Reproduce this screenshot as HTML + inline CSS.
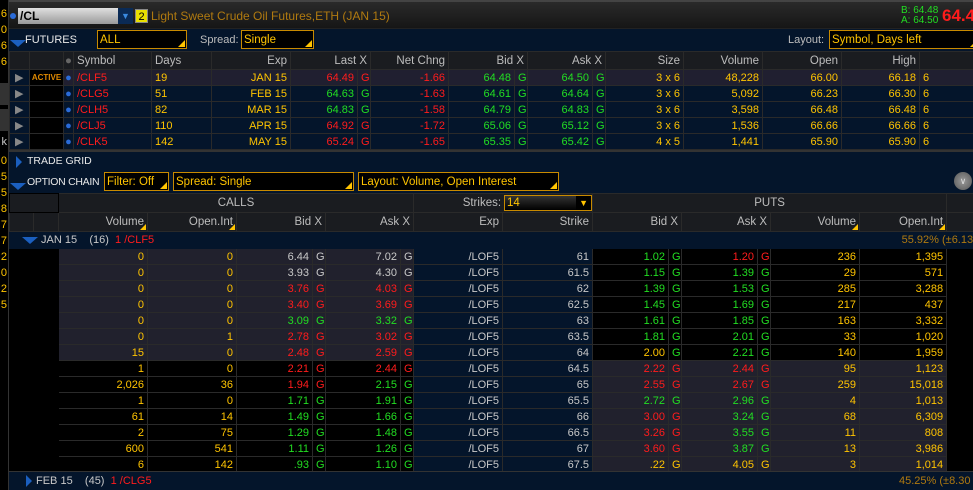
<!DOCTYPE html>
<html><head><meta charset="utf-8">
<style>
*{margin:0;padding:0;box-sizing:border-box}
body{width:973px;height:490px;background:#000;overflow:hidden;position:relative;font-family:"Liberation Sans",sans-serif;font-size:11px;color:#c8c8c8}
.abs{position:absolute}
.y{color:#ffc400}.r{color:#ff1c1c}.g{color:#22dd22}.w{color:#c8c8c8}.o{color:#e08a00}
table{border-collapse:collapse;table-layout:fixed;position:absolute}
td{border:1px solid #2a2a2a;white-space:nowrap;overflow:hidden;text-align:right;padding:0 3px;height:16px;line-height:14px}
td.gl{text-align:left;padding-left:3px}
td.l{text-align:left}
.sel{position:absolute;border:1px solid #c88a00;background:#000;color:#ffc400;font-size:11.5px;padding-left:2px;line-height:15px}
.sel:after{content:"";position:absolute;right:1px;bottom:1px;border-left:7px solid transparent;border-bottom:7px solid #ffc400}
.tri-d{display:inline-block;width:0;height:0;border-left:8px solid transparent;border-right:8px solid transparent;border-top:7px solid #1b5fbf}
.tri-r{display:inline-block;width:0;height:0;border-top:6px solid transparent;border-bottom:6px solid transparent;border-left:6px solid #1b5fbf}
.hd td{background:#1a1c20;color:#bdbdbd;font-size:11.5px}
.srt{position:relative}
.srt:after{content:"";position:absolute;right:1px;bottom:1px;border-left:6px solid transparent;border-bottom:6px solid #ffc400}
.nv{background:#04152b}
.sh{background:#21212d}
.bk{background:#000}
</style></head><body>
<!-- left strip -->
<div class="abs" style="left:0;top:0;width:9px;height:490px;background:#000;border-right:1px solid #333"></div>
<div class="abs y" style="left:-3px;top:6px;font-size:11px;line-height:16px;width:10px;text-align:right">
6<br>0<br>6<br>6</div>
<div class="abs" style="left:0;top:83px;width:8px;height:22px;background:#333"></div>
<div class="abs" style="left:0;top:109px;width:8px;height:22px;background:#333"></div>
<div class="abs w" style="left:-3px;top:136px;width:10px;text-align:right">k</div>
<div class="abs y" style="left:-3px;top:153px;line-height:16px;width:10px;text-align:right">0<br>5<br>5<br>8<br>7<br>7<br>2<br>0<br>2<br>5</div>

<!-- top bar -->
<div class="abs" style="left:9px;top:0;width:964px;height:28px;background:linear-gradient(#2a2a2a,#161616);border-top:2px solid #444"></div>
<div class="abs" style="left:10px;top:13px;width:6px;height:6px;border-radius:3px;background:#2a6bd8"></div>
<div class="abs" style="left:18px;top:8px;width:100px;height:16px;background:linear-gradient(#e0e0e0,#9a9a9a);color:#000;font-size:12px;font-weight:bold;padding-left:2px;line-height:16px">/CL</div>
<div class="abs" style="left:118px;top:8px;width:15px;height:16px;background:#0a2a55;color:#3a8ae0;text-align:center;font-size:9px;line-height:16px">&#9660;</div>
<div class="abs" style="left:135px;top:9px;width:13px;height:14px;background:#e8e000;color:#000;text-align:center;line-height:14px;font-size:11px;border:1px solid #888">2</div>
<div class="abs" style="left:151px;top:9px;color:#b07a10;font-size:12px">Light Sweet Crude Oil Futures,ETH (JAN 15)</div>
<div class="abs g" style="left:901px;top:6px;font-size:10px;line-height:10px">B: 64.48<br>A: 64.50</div>
<div class="abs r" style="left:942px;top:6px;font-size:17px;font-weight:bold">64.49</div>

<!-- futures header -->
<div class="abs nv" style="left:9px;top:28px;width:964px;height:23px;border-top:1px solid #222"></div>
<div class="abs" style="left:10px;top:38px"><span class="tri-d"></span></div>
<div class="abs" style="left:25px;top:34px;color:#e8e8e8;font-size:11px">FUTURES</div>
<div class="sel" style="left:97px;top:30px;width:90px;height:19px;line-height:18px">ALL</div>
<div class="abs" style="left:200px;top:34px;color:#bdbdbd;font-size:11px">Spread:</div>
<div class="sel" style="left:241px;top:30px;width:73px;height:19px;line-height:18px">Single</div>
<div class="abs" style="left:788px;top:34px;color:#bdbdbd;font-size:11px">Layout:</div>
<div class="sel" style="left:829px;top:30px;width:150px;height:19px;line-height:18px">Symbol, Days left</div>

<table style="left:9px;top:51px;width:1000px">
<colgroup><col style="width:20px"><col style="width:34px"><col style="width:10px"><col style="width:78px"><col style="width:60px"><col style="width:79px"><col style="width:67px"><col style="width:13px"><col style="width:78px"><col style="width:66px"><col style="width:13px"><col style="width:65px"><col style="width:13px"><col style="width:78px"><col style="width:79px"><col style="width:79px"><col style="width:78px"><col style="width:90px"></colgroup>
<tr class="hd" style="height:18px"><td class="nv"></td><td></td><td style="color:#666;text-align:center;padding:0">●</td><td class="l">Symbol</td><td class="l">Days</td><td>Exp</td><td colspan="2">Last X</td><td>Net Chng</td><td colspan="2">Bid X</td><td colspan="2">Ask X</td><td>Size</td><td>Volume</td><td>Open</td><td>High</td><td></td></tr>
<tr style="background:#201f30"><td class="nv" style="color:#888;padding:0 0 0 5px;text-align:left">▶</td><td class="bk o" style="font-size:8px;padding:0;text-align:center;font-weight:bold">ACTIVE</td><td style="color:#2a6bd8;padding:0;text-align:center">●</td><td class="l r">/CLF5</td><td class="l y">19</td><td class="y">JAN 15</td><td class="r">64.49</td><td class="gl r">G</td><td class="r">-1.66</td><td class="g">64.48</td><td class="gl g">G</td><td class="g">64.50</td><td class="gl g">G</td><td class="y">3 x 6</td><td class="y">48,228</td><td class="y">66.00</td><td class="y">66.18</td><td class="y l">6</td></tr>
<tr class="nv"><td style="color:#888;padding:0 0 0 5px;text-align:left">▶</td><td class="bk"></td><td style="color:#2a6bd8;padding:0;text-align:center">●</td><td class="l r">/CLG5</td><td class="l y">51</td><td class="y">FEB 15</td><td class="g">64.63</td><td class="gl g">G</td><td class="r">-1.63</td><td class="g">64.61</td><td class="gl g">G</td><td class="g">64.64</td><td class="gl g">G</td><td class="y">3 x 6</td><td class="y">5,092</td><td class="y">66.23</td><td class="y">66.30</td><td class="y l">6</td></tr>
<tr class="nv"><td style="color:#888;padding:0 0 0 5px;text-align:left">▶</td><td class="bk"></td><td style="color:#2a6bd8;padding:0;text-align:center">●</td><td class="l r">/CLH5</td><td class="l y">82</td><td class="y">MAR 15</td><td class="g">64.83</td><td class="gl g">G</td><td class="r">-1.58</td><td class="g">64.79</td><td class="gl g">G</td><td class="g">64.83</td><td class="gl g">G</td><td class="y">3 x 6</td><td class="y">3,598</td><td class="y">66.48</td><td class="y">66.48</td><td class="y l">6</td></tr>
<tr class="nv"><td style="color:#888;padding:0 0 0 5px;text-align:left">▶</td><td class="bk"></td><td style="color:#2a6bd8;padding:0;text-align:center">●</td><td class="l r">/CLJ5</td><td class="l y">110</td><td class="y">APR 15</td><td class="r">64.92</td><td class="gl r">G</td><td class="r">-1.72</td><td class="g">65.06</td><td class="gl g">G</td><td class="g">65.12</td><td class="gl g">G</td><td class="y">3 x 6</td><td class="y">1,536</td><td class="y">66.66</td><td class="y">66.66</td><td class="y l">6</td></tr>
<tr class="nv"><td style="color:#888;padding:0 0 0 5px;text-align:left">▶</td><td class="bk"></td><td style="color:#2a6bd8;padding:0;text-align:center">●</td><td class="l r">/CLK5</td><td class="l y">142</td><td class="y">MAY 15</td><td class="r">65.24</td><td class="gl r">G</td><td class="r">-1.65</td><td class="g">65.35</td><td class="gl g">G</td><td class="g">65.42</td><td class="gl g">G</td><td class="y">4 x 5</td><td class="y">1,441</td><td class="y">65.90</td><td class="y">65.90</td><td class="y l">6</td></tr>
</table>

<!-- trade grid / option chain -->
<div class="abs nv" style="left:9px;top:150px;width:964px;height:43px;border-top:2px solid #333"></div>
<div class="abs" style="left:16px;top:156px"><span class="tri-r"></span></div>
<div class="abs" style="left:27px;top:155px;color:#e8e8e8;font-size:10.5px">TRADE GRID</div>
<div class="abs" style="left:10px;top:181px"><span class="tri-d"></span></div>
<div class="abs" style="left:27px;top:176px;color:#e8e8e8;font-size:10.5px;letter-spacing:-0.3px">OPTION CHAIN</div>
<div class="sel" style="left:104px;top:172px;width:65px;height:19px;line-height:19px">Filter: Off</div>
<div class="sel" style="left:173px;top:172px;width:181px;height:19px;line-height:19px">Spread: Single</div>
<div class="sel" style="left:358px;top:172px;width:201px;height:19px;line-height:19px">Layout: Volume, Open Interest</div>
<div class="abs" style="left:954px;top:172px;width:18px;height:18px;border-radius:9px;background:radial-gradient(#9a9a9a,#555);color:#ddd;font-size:9px;text-align:center;line-height:18px">&#8744;</div>

<table style="left:9px;top:193px;width:964px">
<colgroup><col style="width:24px"><col style="width:25px"><col style="width:89px"><col style="width:89px"><col style="width:76px"><col style="width:13px"><col style="width:75px"><col style="width:13px"><col style="width:89px"><col style="width:90px"><col style="width:76px"><col style="width:13px"><col style="width:76px"><col style="width:13px"><col style="width:89px"><col style="width:87px"><col style="width:27px"></colgroup>
<tr class="hd" style="height:19px"><td class="bk" colspan="2" style="border-color:#000"></td><td colspan="6" style="text-align:center">CALLS</td><td class="nv" colspan="2" style="padding:0"><span style="display:inline-block;vertical-align:middle">Strikes:</span><span style="display:inline-block;vertical-align:middle;width:88px;height:16px;border:1px solid #c88a00;background:linear-gradient(#333,#000);color:#ffc400;text-align:left;padding-left:2px;margin-left:3px;position:relative;line-height:14px">14<span style="position:absolute;right:0;top:0;width:15px;height:14px;background:#000;color:#ffc400;text-align:center;font-size:9px">▼</span></span></td><td colspan="6" style="text-align:center">PUTS</td><td class="bk"></td></tr>
<tr class="hd" style="height:19px"><td></td><td></td><td class="srt">Volume</td><td class="srt">Open.Int</td><td colspan="2">Bid X</td><td colspan="2">Ask X</td><td class="nv">Exp</td><td class="nv">Strike</td><td colspan="2">Bid X</td><td colspan="2">Ask X</td><td class="srt">Volume</td><td class="srt">Open.Int</td><td class="bk"></td></tr>
<tr class="nv" style="height:17px"><td colspan="9" style="text-align:left;padding-left:12px;border-color:#04152b;color:#c8c8c8"><span class="tri-d" style="vertical-align:middle"></span> JAN 15 &nbsp;&nbsp; (16) &nbsp;<span class="r">1 /CLF5</span></td><td colspan="8" style="color:#b07a10;border-color:#04152b;text-align:right;padding-right:0">55.92% (±6.13</td></tr>

<tr><td class="bk" style="border-color:#000"></td><td class="bk" style="border-color:#000"></td><td class="sh y">0</td><td class="sh y">0</td><td class="sh w">6.44</td><td class="sh gl w">G</td><td class="sh w">7.02</td><td class="sh gl w">G</td><td class="nv w">/LOF5</td><td class="nv w">61</td><td class="bk g">1.02</td><td class="bk gl g">G</td><td class="bk r">1.20</td><td class="bk gl r">G</td><td class="bk y">236</td><td class="bk y">1,395</td><td class="bk" style="border-color:#000"></td></tr>
<tr><td class="bk" style="border-color:#000"></td><td class="bk" style="border-color:#000"></td><td class="sh y">0</td><td class="sh y">0</td><td class="sh w">3.93</td><td class="sh gl w">G</td><td class="sh w">4.30</td><td class="sh gl w">G</td><td class="nv w">/LOF5</td><td class="nv w">61.5</td><td class="bk g">1.15</td><td class="bk gl g">G</td><td class="bk g">1.39</td><td class="bk gl g">G</td><td class="bk y">29</td><td class="bk y">571</td><td class="bk" style="border-color:#000"></td></tr>
<tr><td class="bk" style="border-color:#000"></td><td class="bk" style="border-color:#000"></td><td class="sh y">0</td><td class="sh y">0</td><td class="sh r">3.76</td><td class="sh gl r">G</td><td class="sh r">4.03</td><td class="sh gl r">G</td><td class="nv w">/LOF5</td><td class="nv w">62</td><td class="bk g">1.39</td><td class="bk gl g">G</td><td class="bk g">1.53</td><td class="bk gl g">G</td><td class="bk y">285</td><td class="bk y">3,288</td><td class="bk" style="border-color:#000"></td></tr>
<tr><td class="bk" style="border-color:#000"></td><td class="bk" style="border-color:#000"></td><td class="sh y">0</td><td class="sh y">0</td><td class="sh r">3.40</td><td class="sh gl r">G</td><td class="sh r">3.69</td><td class="sh gl r">G</td><td class="nv w">/LOF5</td><td class="nv w">62.5</td><td class="bk g">1.45</td><td class="bk gl g">G</td><td class="bk g">1.69</td><td class="bk gl g">G</td><td class="bk y">217</td><td class="bk y">437</td><td class="bk" style="border-color:#000"></td></tr>
<tr><td class="bk" style="border-color:#000"></td><td class="bk" style="border-color:#000"></td><td class="sh y">0</td><td class="sh y">0</td><td class="sh g">3.09</td><td class="sh gl g">G</td><td class="sh g">3.32</td><td class="sh gl g">G</td><td class="nv w">/LOF5</td><td class="nv w">63</td><td class="bk g">1.61</td><td class="bk gl g">G</td><td class="bk g">1.85</td><td class="bk gl g">G</td><td class="bk y">163</td><td class="bk y">3,332</td><td class="bk" style="border-color:#000"></td></tr>
<tr><td class="bk" style="border-color:#000"></td><td class="bk" style="border-color:#000"></td><td class="sh y">0</td><td class="sh y">1</td><td class="sh r">2.78</td><td class="sh gl r">G</td><td class="sh r">3.02</td><td class="sh gl r">G</td><td class="nv w">/LOF5</td><td class="nv w">63.5</td><td class="bk g">1.81</td><td class="bk gl g">G</td><td class="bk g">2.01</td><td class="bk gl g">G</td><td class="bk y">33</td><td class="bk y">1,020</td><td class="bk" style="border-color:#000"></td></tr>
<tr><td class="bk" style="border-color:#000"></td><td class="bk" style="border-color:#000"></td><td class="sh y">15</td><td class="sh y">0</td><td class="sh r">2.48</td><td class="sh gl r">G</td><td class="sh r">2.59</td><td class="sh gl r">G</td><td class="nv w">/LOF5</td><td class="nv w">64</td><td class="bk y">2.00</td><td class="bk gl g">G</td><td class="bk g">2.21</td><td class="bk gl g">G</td><td class="bk y">140</td><td class="bk y">1,959</td><td class="bk" style="border-color:#000"></td></tr>
<tr><td class="bk" style="border-color:#000"></td><td class="bk" style="border-color:#000"></td><td class="bk y">1</td><td class="bk y">0</td><td class="bk r">2.21</td><td class="bk gl r">G</td><td class="bk r">2.44</td><td class="bk gl r">G</td><td class="nv w">/LOF5</td><td class="nv w">64.5</td><td class="sh r">2.22</td><td class="sh gl r">G</td><td class="sh r">2.44</td><td class="sh gl r">G</td><td class="sh y">95</td><td class="sh y">1,123</td><td class="bk" style="border-color:#000"></td></tr>
<tr><td class="bk" style="border-color:#000"></td><td class="bk" style="border-color:#000"></td><td class="bk y">2,026</td><td class="bk y">36</td><td class="bk r">1.94</td><td class="bk gl r">G</td><td class="bk g">2.15</td><td class="bk gl g">G</td><td class="nv w">/LOF5</td><td class="nv w">65</td><td class="sh r">2.55</td><td class="sh gl r">G</td><td class="sh r">2.67</td><td class="sh gl r">G</td><td class="sh y">259</td><td class="sh y">15,018</td><td class="bk" style="border-color:#000"></td></tr>
<tr><td class="bk" style="border-color:#000"></td><td class="bk" style="border-color:#000"></td><td class="bk y">1</td><td class="bk y">0</td><td class="bk g">1.71</td><td class="bk gl g">G</td><td class="bk g">1.91</td><td class="bk gl g">G</td><td class="nv w">/LOF5</td><td class="nv w">65.5</td><td class="sh g">2.72</td><td class="sh gl g">G</td><td class="sh g">2.96</td><td class="sh gl g">G</td><td class="sh y">4</td><td class="sh y">1,013</td><td class="bk" style="border-color:#000"></td></tr>
<tr><td class="bk" style="border-color:#000"></td><td class="bk" style="border-color:#000"></td><td class="bk y">61</td><td class="bk y">14</td><td class="bk g">1.49</td><td class="bk gl g">G</td><td class="bk g">1.66</td><td class="bk gl g">G</td><td class="nv w">/LOF5</td><td class="nv w">66</td><td class="sh r">3.00</td><td class="sh gl r">G</td><td class="sh g">3.24</td><td class="sh gl g">G</td><td class="sh y">68</td><td class="sh y">6,309</td><td class="bk" style="border-color:#000"></td></tr>
<tr><td class="bk" style="border-color:#000"></td><td class="bk" style="border-color:#000"></td><td class="bk y">2</td><td class="bk y">75</td><td class="bk g">1.29</td><td class="bk gl g">G</td><td class="bk g">1.48</td><td class="bk gl g">G</td><td class="nv w">/LOF5</td><td class="nv w">66.5</td><td class="sh r">3.26</td><td class="sh gl r">G</td><td class="sh g">3.55</td><td class="sh gl g">G</td><td class="sh y">11</td><td class="sh y">808</td><td class="bk" style="border-color:#000"></td></tr>
<tr><td class="bk" style="border-color:#000"></td><td class="bk" style="border-color:#000"></td><td class="bk y">600</td><td class="bk y">541</td><td class="bk g">1.11</td><td class="bk gl g">G</td><td class="bk g">1.26</td><td class="bk gl g">G</td><td class="nv w">/LOF5</td><td class="nv w">67</td><td class="sh r">3.60</td><td class="sh gl r">G</td><td class="sh g">3.87</td><td class="sh gl g">G</td><td class="sh y">13</td><td class="sh y">3,986</td><td class="bk" style="border-color:#000"></td></tr>
<tr><td class="bk" style="border-color:#000"></td><td class="bk" style="border-color:#000"></td><td class="bk y">6</td><td class="bk y">142</td><td class="bk g">.93</td><td class="bk gl g">G</td><td class="bk g">1.10</td><td class="bk gl g">G</td><td class="nv w">/LOF5</td><td class="nv w">67.5</td><td class="sh y">.22</td><td class="sh gl y">G</td><td class="sh y">4.05</td><td class="sh gl y">G</td><td class="sh y">3</td><td class="sh y">1,014</td><td class="bk" style="border-color:#000"></td></tr>
</table>

<div class="abs nv" style="left:9px;top:471px;width:964px;height:19px;border-top:1px solid #333"></div>
<div class="abs" style="left:26px;top:475px"><span class="tri-r"></span></div>
<div class="abs w" style="left:36px;top:475px">FEB 15 &nbsp;&nbsp; (45) &nbsp;<span class="r">1 /CLG5</span></div>
<div class="abs" style="left:899px;top:475px;color:#b07a10">45.25% (±8.30</div>
</body></html>
